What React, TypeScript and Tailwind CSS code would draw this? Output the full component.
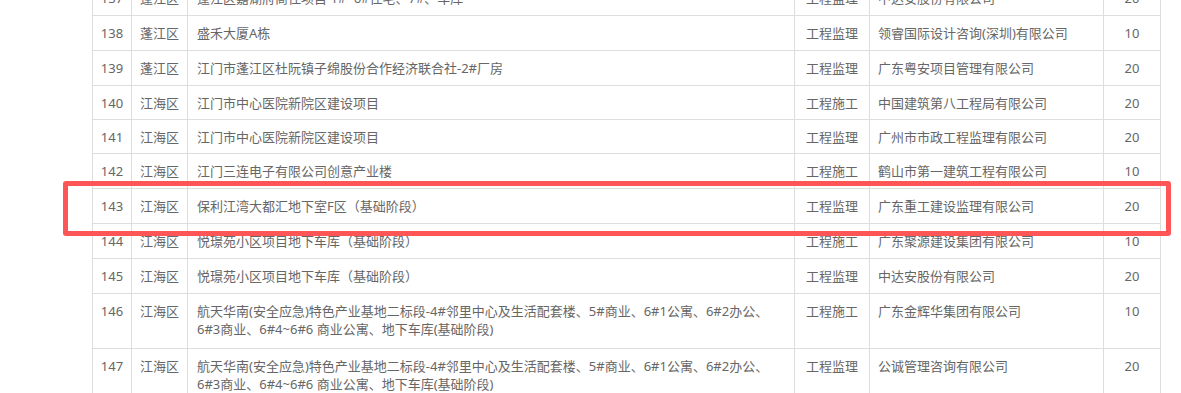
type Row = {
  no: number;
  area: string;
  project: string[];
  kind: string;
  company: string;
  score: number;
  tight?: boolean;
};

const rows: Row[] = [
  { no: 137, area: "蓬江区", project: ["蓬江区嘉湖府商住项目 1#~6#住宅、7#、车库"], kind: "工程监理", company: "中达安股份有限公司", score: 20 },
  { no: 138, area: "蓬江区", project: ["盛禾大厦A栋"], kind: "工程监理", company: "领睿国际设计咨询(深圳)有限公司", score: 10 },
  { no: 139, area: "蓬江区", project: ["江门市蓬江区杜阮镇子绵股份合作经济联合社-2#厂房"], kind: "工程监理", company: "广东粤安项目管理有限公司", score: 20 },
  { no: 140, area: "江海区", project: ["江门市中心医院新院区建设项目"], kind: "工程施工", company: "中国建筑第八工程局有限公司", score: 20, tight: true },
  { no: 141, area: "江海区", project: ["江门市中心医院新院区建设项目"], kind: "工程监理", company: "广州市市政工程监理有限公司", score: 20, tight: true },
  { no: 142, area: "江海区", project: ["江门三连电子有限公司创意产业楼"], kind: "工程施工", company: "鹤山市第一建筑工程有限公司", score: 10 },
  { no: 143, area: "江海区", project: ["保利江湾大都汇地下室F区（基础阶段）"], kind: "工程监理", company: "广东重工建设监理有限公司", score: 20 },
  { no: 144, area: "江海区", project: ["悦璟苑小区项目地下车库（基础阶段）"], kind: "工程施工", company: "广东聚源建设集团有限公司", score: 10 },
  { no: 145, area: "江海区", project: ["悦璟苑小区项目地下车库（基础阶段）"], kind: "工程监理", company: "中达安股份有限公司", score: 20 },
  {
    no: 146,
    area: "江海区",
    project: [
      "航天华南(安全应急)特色产业基地二标段-4#邻里中心及生活配套楼、5#商业、6#1公寓、6#2办公、",
      "6#3商业、6#4~6#6 商业公寓、地下车库(基础阶段)",
    ],
    kind: "工程施工",
    company: "广东金辉华集团有限公司",
    score: 10,
  },
  {
    no: 147,
    area: "江海区",
    project: [
      "航天华南(安全应急)特色产业基地二标段-4#邻里中心及生活配套楼、5#商业、6#1公寓、6#2办公、",
      "6#3商业、6#4~6#6 商业公寓、地下车库(基础阶段)",
    ],
    kind: "工程监理",
    company: "公诚管理咨询有限公司",
    score: 20,
  },
];

const cell = "border border-[#dddddd] px-0 pt-[8px] align-top leading-[18px]";
const line = "h-[18px] whitespace-nowrap";

export default function App() {
  return (
    <div
      className="relative h-[393px] w-[1181px] overflow-hidden bg-white text-[13px] text-[#666666]"
      style={{ fontFamily: '"Noto Sans", "Noto Sans CJK SC", sans-serif' }}
    >
      <table className="ml-[92px] -mt-[20px] w-[1068px] table-fixed border-collapse">
        <colgroup>
          <col className="w-[39px]" />
          <col className="w-[56px]" />
          <col className="w-[607px]" />
          <col className="w-[75px]" />
          <col className="w-[234px]" />
          <col className="w-[57px]" />
        </colgroup>
        <tbody>
          {rows.map((r) => {
            const pb = r.project.length > 1 ? "pb-[10px]" : r.tight ? "pb-[7px]" : "pb-[8px]";
            return (
              <tr key={r.no}>
                <td className={`${cell} ${pb} text-center`}>
                  <div className={line}>{r.no}</div>
                </td>
                <td className={`${cell} ${pb} text-center`}>
                  <div className={line}>{r.area}</div>
                </td>
                <td className={`${cell} ${pb} pl-[9px] pr-[8px] text-left`}>
                  {r.project.map((text, i) => (
                    <div key={i} className={line}>
                      {text}
                    </div>
                  ))}
                </td>
                <td className={`${cell} ${pb} text-center`}>
                  <div className={line}>{r.kind}</div>
                </td>
                <td className={`${cell} ${pb} pl-[8px] text-left`}>
                  <div className={line}>{r.company}</div>
                </td>
                <td className={`${cell} ${pb} text-center`}>
                  <div className={line}>{r.score}</div>
                </td>
              </tr>
            );
          })}
        </tbody>
      </table>

      {/* annotation box drawn over row 143 */}
      <div className="pointer-events-none absolute left-[63px] top-[181px] h-[55px] w-[1108px] rounded-[3px] border-[5px] border-[#fe5557]" />
    </div>
  );
}
